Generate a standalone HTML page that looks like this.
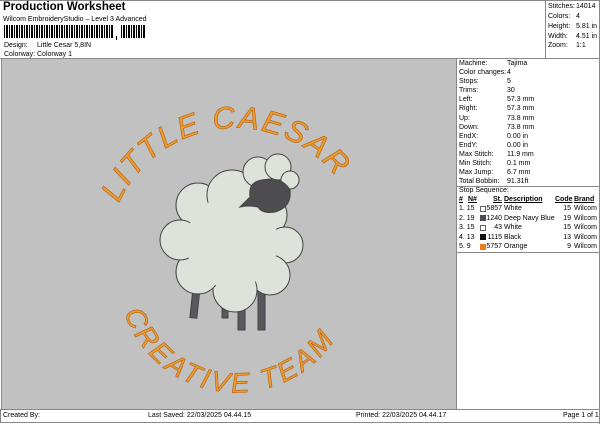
<!DOCTYPE html>
<html><head><style>
*{margin:0;padding:0;box-sizing:border-box}
body{width:600px;height:424px;background:#fff;font-family:"Liberation Sans",sans-serif;color:#000;position:relative;overflow:hidden;font-size:7px}
.a{position:absolute;white-space:nowrap}
</style></head><body>
<div class="a" style="left:3px;top:1px;font-size:11.5px;font-weight:bold">Production Worksheet</div>
<div class="a" style="left:3px;top:16px;font-size:7px">Wilcom EmbroideryStudio – Level 3 Advanced</div>
<svg class="a" style="left:4px;top:25px" width="142" height="16">
<g fill="#000">
<rect x="0" y="0" width="1" height="13"/><rect x="2" y="0" width="2" height="13"/><rect x="5" y="0" width="1" height="13"/><rect x="7" y="0" width="2" height="13"/><rect x="10" y="0" width="1" height="13"/><rect x="12" y="0" width="2" height="13"/><rect x="15" y="0" width="1" height="13"/><rect x="17" y="0" width="2" height="13"/><rect x="20" y="0" width="1" height="13"/><rect x="22" y="0" width="2" height="13"/><rect x="25" y="0" width="1" height="13"/><rect x="27" y="0" width="2" height="13"/><rect x="30" y="0" width="1" height="13"/><rect x="32" y="0" width="2" height="13"/><rect x="35" y="0" width="1" height="13"/><rect x="37" y="0" width="2" height="13"/><rect x="40" y="0" width="1" height="13"/><rect x="42" y="0" width="2" height="13"/><rect x="45" y="0" width="1" height="13"/><rect x="47" y="0" width="2" height="13"/><rect x="50" y="0" width="1" height="13"/><rect x="52" y="0" width="2" height="13"/><rect x="55" y="0" width="1" height="13"/><rect x="57" y="0" width="2" height="13"/><rect x="60" y="0" width="1" height="13"/><rect x="62" y="0" width="2" height="13"/><rect x="65" y="0" width="1" height="13"/><rect x="67" y="0" width="2" height="13"/><rect x="70" y="0" width="1" height="13"/><rect x="72" y="0" width="2" height="13"/><rect x="75" y="0" width="1" height="13"/><rect x="77" y="0" width="2" height="13"/><rect x="80" y="0" width="1" height="13"/><rect x="82" y="0" width="2" height="13"/><rect x="85" y="0" width="1" height="13"/><rect x="87" y="0" width="2" height="13"/><rect x="90" y="0" width="1" height="13"/><rect x="92" y="0" width="2" height="13"/><rect x="95" y="0" width="1" height="13"/><rect x="97" y="0" width="2" height="13"/><rect x="100" y="0" width="1" height="13"/><rect x="102" y="0" width="2" height="13"/><rect x="105" y="0" width="1" height="13"/><rect x="107" y="0" width="2" height="13"/>
<rect x="112" y="11" width="1" height="4"/>
<rect x="117" y="0" width="1" height="13"/><rect x="119" y="0" width="2" height="13"/><rect x="122" y="0" width="1" height="13"/><rect x="124" y="0" width="2" height="13"/><rect x="127" y="0" width="1" height="13"/><rect x="129" y="0" width="2" height="13"/><rect x="132" y="0" width="1" height="13"/><rect x="134" y="0" width="2" height="13"/><rect x="137" y="0" width="1" height="13"/><rect x="139" y="0" width="2" height="13"/>
</g></svg>
<div class="a" style="left:4px;top:42px">Design:</div><div class="a" style="left:37px;top:42px">Little Cesar 5,8IN</div>
<div class="a" style="left:4px;top:51px">Colorway:</div><div class="a" style="left:37px;top:51px">Colorway 1</div>

<div class="a" style="left:0;top:0;width:600px;height:1px;background:#888"></div>
<div class="a" style="left:545px;top:0;width:1px;height:59px;background:#888"></div>
<div class="a" style="left:599px;top:0;width:1px;height:424px;background:#888"></div>
<div class="a" style="left:548px;top:3px">Stitches:</div><div class="a" style="left:576px;top:3px">14014</div>
<div class="a" style="left:548px;top:13px">Colors:</div><div class="a" style="left:576px;top:13px">4</div>
<div class="a" style="left:548px;top:23px">Height:</div><div class="a" style="left:576px;top:23px">5.81 in</div>
<div class="a" style="left:548px;top:33px">Width:</div><div class="a" style="left:576px;top:33px">4.51 in</div>
<div class="a" style="left:548px;top:42px">Zoom:</div><div class="a" style="left:576px;top:42px">1:1</div>

<div class="a" style="left:0;top:58px;width:600px;height:1px;background:#888"></div>
<div class="a" style="left:1px;top:59px;width:455px;height:350px;background:#c1c1c1;border-left:1px solid #888"></div>
<div class="a" style="left:456px;top:58px;width:1px;height:351px;background:#888"></div>

<div class="a" style="left:459px;top:59px;line-height:9.1px">Machine:<br>Color changes:<br>Stops:<br>Trims:<br>Left:<br>Right:<br>Up:<br>Down:<br>EndX:<br>EndY:<br>Max Stitch:<br>Min Stitch:<br>Max Jump:<br>Total Bobbin:</div>
<div class="a" style="left:507px;top:59px;line-height:9.1px">Tajima<br>4<br>5<br>30<br>57.3 mm<br>57.3 mm<br>73.8 mm<br>73.8 mm<br>0.00 in<br>0.00 in<br>11.9 mm<br>0.1 mm<br>6.7 mm<br>91.31ft</div>
<div class="a" style="left:457px;top:186px;width:143px;height:1px;background:#888"></div>
<div class="a" style="left:459px;top:187px">Stop Sequence:</div>
<div class="a" style="left:459px;top:196px;font-weight:bold;text-decoration:underline">#</div>
<div class="a" style="left:468px;top:196px;font-weight:bold;text-decoration:underline">N#</div>
<div class="a" style="left:493px;top:196px;font-weight:bold;text-decoration:underline">St.</div>
<div class="a" style="left:504px;top:196px;font-weight:bold;text-decoration:underline">Description</div>
<div class="a" style="left:555px;top:196px;font-weight:bold;text-decoration:underline">Code</div>
<div class="a" style="left:574px;top:196px;font-weight:bold;text-decoration:underline">Brand</div>
<div class="a" style="left:459px;top:204px;line-height:9.5px">1. 15<br>2. 19<br>3. 15<br>4. 13<br>5. 9</div>
<div class="a" style="left:480px;top:206px;width:6px;height:6px;border:1px solid #666;background:#fff"></div>
<div class="a" style="left:480px;top:215px;width:6px;height:6px;background:#4b4b5c"></div>
<div class="a" style="left:480px;top:225px;width:6px;height:6px;border:1px solid #666;background:#fff"></div>
<div class="a" style="left:480px;top:234px;width:6px;height:6px;background:#111"></div>
<div class="a" style="left:480px;top:244px;width:6px;height:6px;background:#e87b1c"></div>
<div class="a" style="left:486px;top:204px;width:16px;text-align:right;line-height:9.5px">5857<br>1240<br>43<br>1115<br>5757</div>
<div class="a" style="left:504px;top:204px;line-height:9.5px">White<br>Deep Navy Blue<br>White<br>Black<br>Orange</div>
<div class="a" style="left:560px;top:204px;width:11px;text-align:right;line-height:9.5px">15<br>19<br>15<br>13<br>9</div>
<div class="a" style="left:574px;top:204px;line-height:9.5px">Wilcom<br>Wilcom<br>Wilcom<br>Wilcom<br>Wilcom</div>
<div class="a" style="left:457px;top:252px;width:143px;height:1px;background:#888"></div>

<div class="a" style="left:0;top:409px;width:600px;height:1px;background:#888"></div>
<div class="a" style="left:0;top:422px;width:600px;height:1px;background:#888"></div>
<div class="a" style="left:0;top:409px;width:1px;height:14px;background:#888"></div>
<div class="a" style="left:3px;top:412px">Created By:</div>
<div class="a" style="left:148px;top:412px">Last Saved: 22/03/2025 04.44.15</div>
<div class="a" style="left:356px;top:412px">Printed: 22/03/2025 04.44.17</div>
<div class="a" style="left:563px;top:412px">Page 1 of 1</div>

<svg class="a" style="left:0;top:0" width="456" height="409">
<defs>
<path id="top" d="M118,205 A128,128 0 0 1 345,190"/>
<path id="bot" d="M122,305 A118,118 0 0 0 350,305"/>
</defs>
<g font-family="Liberation Sans, sans-serif" font-style="italic" font-size="31" fill="#ee9a2e" stroke="#b06010" stroke-width="0.6">
<text><textPath href="#top" startOffset="2" textLength="262">LITTLE CAESAR</textPath></text>
<text font-size="28"><textPath href="#bot" startOffset="8" textLength="262">CREATIVE TEAM</textPath></text>
</g>
<g stroke="#444" stroke-width="1">
<rect x="193" y="270" width="7" height="48" fill="#58585e" transform="rotate(6 196 288)"/>
<rect x="222" y="292" width="6" height="26" fill="#58585e"/>
<rect x="238" y="283" width="7" height="47" fill="#58585e"/>
<rect x="258" y="285" width="7" height="45" fill="#58585e"/>
<g fill="#dde2da">
<circle cx="198" cy="205" r="22"/><circle cx="232" cy="195" r="25"/><circle cx="265" cy="215" r="22"/><circle cx="285" cy="245" r="18"/><circle cx="270" cy="275" r="20"/><circle cx="235" cy="290" r="22"/><circle cx="198" cy="272" r="22"/><circle cx="180" cy="240" r="20"/><circle cx="232" cy="242" r="46" stroke="none"/>
<circle cx="258" cy="172" r="15"/><circle cx="278" cy="167" r="13"/><circle cx="290" cy="180" r="9"/>
</g>
<path d="M250,197 Q248,182 262,180 Q282,176 290,190 Q292,207 275,212 Q262,214 258,207 Q248,205 240,207 Z" fill="#4d4d50"/>
</g>
</svg>
</body></html>
